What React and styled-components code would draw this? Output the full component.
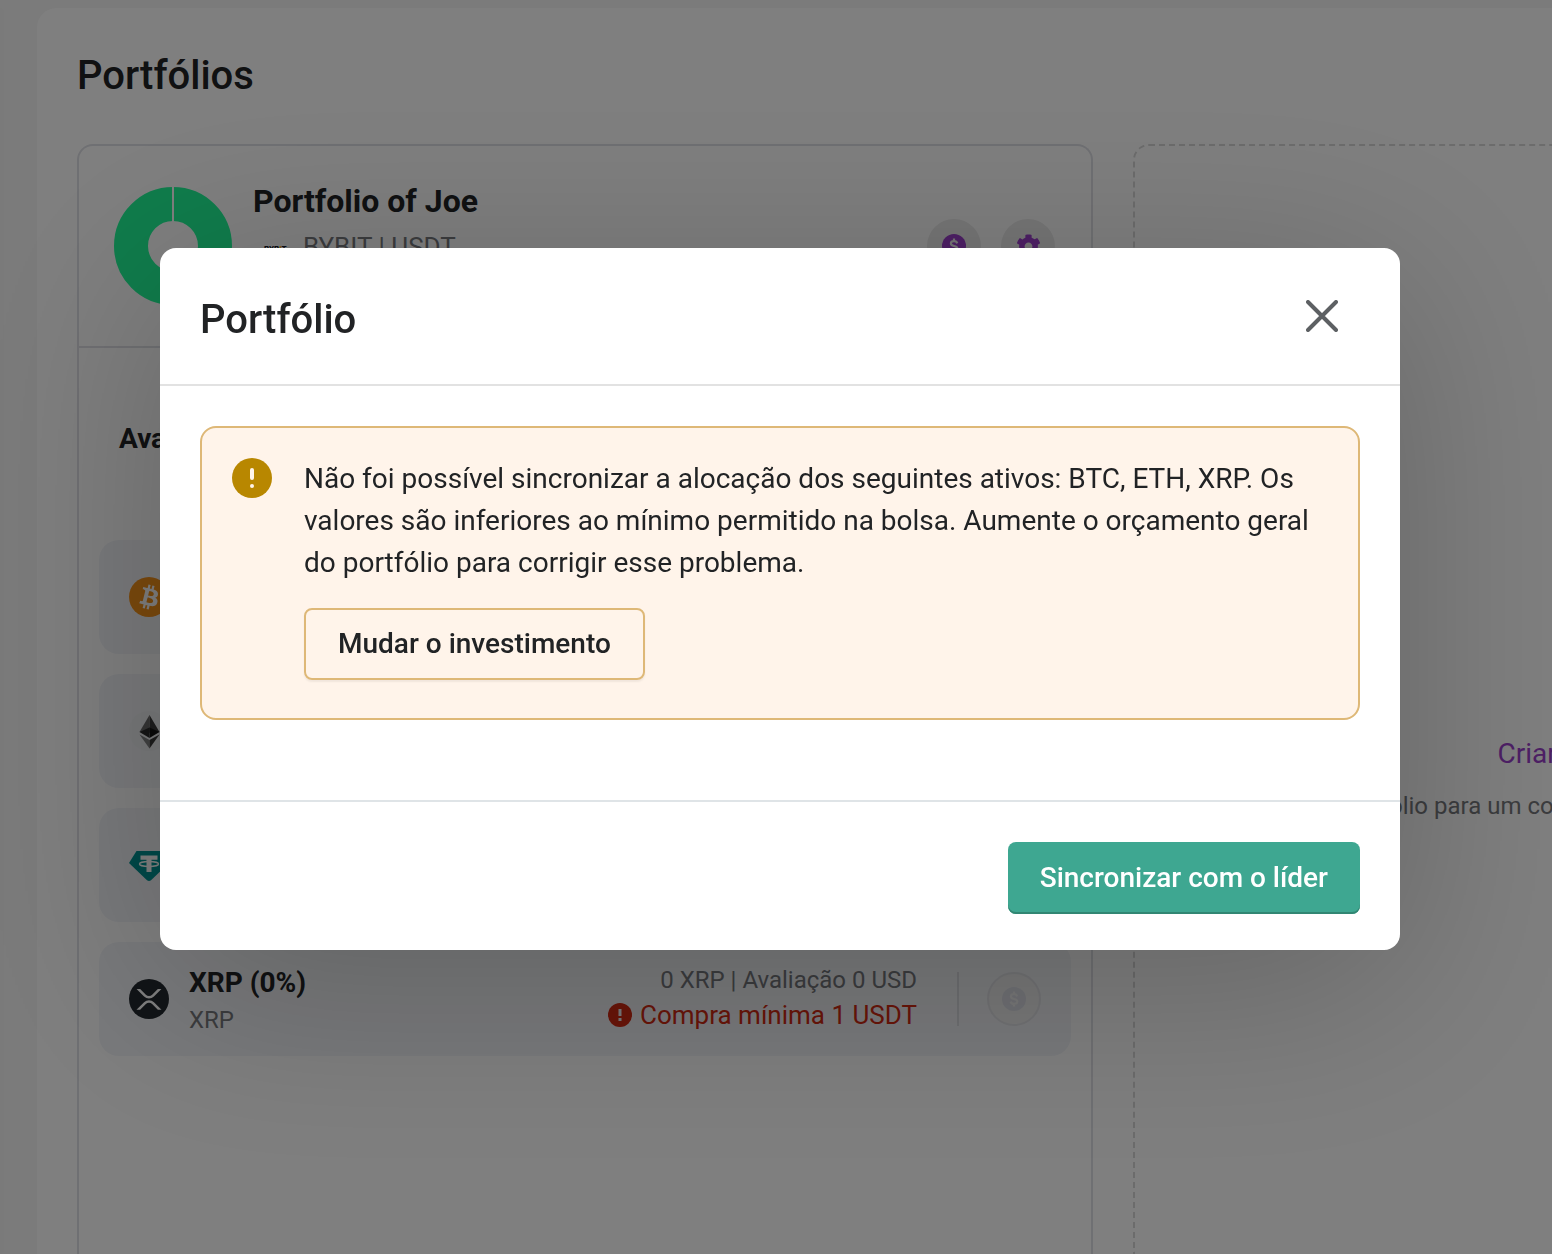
import React from "react";
import styled, { createGlobalStyle } from "styled-components";
import { FaCog } from "react-icons/fa";

const GlobalStyle = createGlobalStyle`
  *, *::before, *::after { box-sizing: border-box; }
  body {
    margin: 0;
    overflow: hidden;
    background: #f7f7f7;
    color: #212325;
    font-family: Roboto, "Liberation Sans", sans-serif;
  }
  h1, h2, h3, p, ul { margin: 0; padding: 0; }
  button { font-family: inherit; cursor: pointer; }
`;

const Page = styled.div`
  display: flex;
  gap: 33px;
  height: 100vh;
  padding-top: 8px;
  overflow: hidden;
`;

const Sidebar = styled.aside`
  flex: none;
  width: 4px;
  border-radius: 0 16px 16px 0;
  background: #f5f5f5;
`;

const Panel = styled.main`
  flex: 1 0 auto;
  display: flex;
  flex-direction: column;
  gap: 38px;
  padding: 38px 40px 0;
  border-radius: 20px 0 0 0;
  background: #fff;
`;

const PageTitle = styled.h1`
  font-size: 40px;
  line-height: 60px;
  font-weight: 500;
`;

const Cards = styled.div`
  flex: 1;
  display: grid;
  grid-template-columns: repeat(2, minmax(1016px, 1fr));
  gap: 40px;
`;

const Card = styled.section`
  border: 2px solid #dfe0e6;
  border-bottom: 0;
  border-radius: 16px 16px 0 0;
`;

const CardHeader = styled.header`
  display: flex;
  align-items: center;
  gap: 20px;
  height: 202px;
  padding: 0 36px 0 34px;
  border-bottom: 2px solid #dfe0e6;
`;

const CardHeading = styled.div`
  flex: 1;
  display: flex;
  flex-direction: column;
  gap: 4px;
  padding-bottom: 50px;
`;

const CardName = styled.h2`
  font-size: 32px;
  line-height: 48px;
  font-weight: 700;
`;

const Exchange = styled.p`
  display: flex;
  align-items: center;
  gap: 8px;
  height: 36px;
  font-size: 26px;
  color: #77797d;
`;

const Actions = styled.div`
  display: flex;
  gap: 20px;
`;

const RoundButton = styled.button`
  display: grid;
  place-items: center;
  width: 54px;
  height: 54px;
  padding: 0;
  border: ${(p) => (p.$outlined ? "2px solid #e4e5e9" : "0")};
  border-radius: 50%;
  background: ${(p) => (p.$outlined ? "#f1f1f2" : "#ececec")};
  color: ${(p) => (p.$outlined ? "#dfe1e9" : "#9b3fcb")};
`;

const Subtitle = styled.h3`
  padding: 68px 40px 78px;
  font-size: 28px;
  line-height: 46px;
  font-weight: 700;
`;

const Assets = styled.ul`
  display: flex;
  flex-direction: column;
  gap: 20px;
  padding: 0 20px;
  list-style: none;
`;

const AssetRow = styled.li`
  display: flex;
  align-items: center;
  gap: 20px;
  height: 114px;
  padding: 0 30px;
  border-radius: 20px;
  background: #f3f5f9;
`;

const AssetText = styled.div`
  flex: 1;
  padding-top: 4px;
`;

const AssetName = styled.p`
  font-size: 28px;
  line-height: 38px;
  font-weight: 700;
`;

const Muted = styled.p`
  font-size: 24px;
  line-height: 36px;
  color: #77797d;
`;

const AssetFigures = styled.div`
  padding-bottom: 4px;
  text-align: right;
`;

const Warning = styled.p`
  display: flex;
  align-items: center;
  justify-content: flex-end;
  gap: 8px;
  font-size: 26px;
  line-height: 34px;
  color: #d42a12;
`;

const AssetAction = styled.div`
  margin-left: 20px;
  padding-left: 28px;
  border-left: 2px solid #dcdee2;
`;

const EmptyCard = styled.section`
  display: flex;
  flex-direction: column;
  align-items: center;
  gap: 8px;
  padding-top: 586px;
  border: 2px dashed #d9d9d9;
  border-bottom: 0;
  border-radius: 16px 16px 0 0;
`;

const CreateLink = styled.a`
  font-size: 28px;
  line-height: 44px;
  color: #9b3fcb;
  text-decoration: none;
`;

const EmptyHint = styled.p`
  font-size: 24px;
  line-height: 44px;
  color: #77797d;
`;

const Backdrop = styled.div`
  position: fixed;
  inset: 0;
  padding: 248px 152px 0 160px;
  background: rgba(0, 0, 0, 0.5);
`;

const Dialog = styled.div`
  border-radius: 16px;
  background: #fff;
  box-shadow: 0 36px 200px rgba(0, 0, 0, 0.22);
`;

const DialogHeader = styled.header`
  display: flex;
  align-items: flex-start;
  justify-content: space-between;
  padding: 40px 40px 32px;
  border-bottom: 2px solid #e2e2e2;
`;

const DialogTitle = styled.h2`
  font-size: 40px;
  line-height: 64px;
  font-weight: 500;
`;

const CloseButton = styled.button`
  display: grid;
  place-items: center;
  width: 76px;
  height: 56px;
  padding: 0;
  border: 0;
  background: transparent;
  color: #5d6063;
`;

const DialogBody = styled.div`
  padding: 40px 40px 80px;
`;

const Alert = styled.div`
  display: flex;
  gap: 32px;
  padding: 30px 30px 38px;
  border: 2px solid #deb877;
  border-radius: 16px;
  background: #fff4ea;
`;

const AlertContent = styled.div`
  flex: 1;
  display: flex;
  flex-direction: column;
  align-items: flex-start;
  gap: 24px;
`;

const AlertText = styled.p`
  font-size: 28px;
  line-height: 42px;
`;

const Button = styled.button`
  height: 72px;
  padding: 0 32px 2px;
  border-radius: 8px;
  font-size: 28px;
  font-weight: 500;
`;

const OutlineButton = styled(Button)`
  border: 2px solid #deb877;
  background: transparent;
  color: #212325;
  box-shadow: 0 2px 2px rgba(0, 0, 0, 0.06);
`;

const PrimaryButton = styled(Button)`
  border: 0;
  background: #3ea791;
  color: #fff;
  box-shadow: inset 0 -2px 0 #328673;
`;

const DialogFooter = styled.footer`
  display: flex;
  justify-content: flex-end;
  padding: 40px 40px 36px;
  border-top: 2px solid #dfe4e7;
`;

const Donut = () => (
  <svg width="120" height="120" viewBox="0 0 120 120" aria-hidden="true">
    <circle cx="60" cy="60" r="42" fill="none" stroke="#20f898" strokeWidth="34" />
    <path d="M60 0v36" stroke="#fff" strokeWidth="2" />
  </svg>
);

const BybitLogo = () => (
  <svg width="42" height="36" viewBox="0 0 42 36" role="img" aria-label="Bybit">
    <text x="11" y="22" fontSize="8" fontWeight="900" fill="#15192a">
      BYB<tspan fill="#f7a600">I</tspan>T
    </text>
  </svg>
);

const DollarIcon = ({ sign }) => (
  <svg width="24" height="24" viewBox="0 0 24 24" aria-hidden="true">
    <circle cx="12" cy="12" r="12" fill="currentColor" />
    <path
      d="M12 4.400v2.600M12 17v2.600M15.200 9.400c-.4-1.500-1.600-2.200-3.200-2.200-1.900 0-3.100.9-3.100 2.300 0 3.500 6.400 1.500 6.400 5 0 1.500-1.400 2.400-3.300 2.400-1.700 0-3-.8-3.400-2.300"
      fill="none"
      stroke={sign}
      strokeWidth="2.200"
    />
  </svg>
);

const BitcoinIcon = () => (
  <svg width="40" height="40" viewBox="0 0 32 32" aria-hidden="true">
    <circle cx="16" cy="16" r="16" fill="#f7931a" />
    <path
      fill="#fff"
      d="M23.189 14.02c.314-2.096-1.283-3.223-3.465-3.975l.708-2.84-1.728-.43-.69 2.765c-.454-.114-.92-.22-1.385-.326l.695-2.783L15.596 6l-.708 2.839c-.376-.086-.746-.17-1.104-.26l.002-.009-2.384-.595-.46 1.846s1.283.294 1.256.312c.7.175.826.638.805 1.006l-.806 3.235c.048.012.11.03.18.057l-.183-.045-1.13 4.532c-.086.212-.303.531-.793.41.018.025-1.256-.313-1.256-.313l-.858 1.978 2.25.561c.418.105.828.215 1.231.318l-.715 2.872 1.727.43.708-2.84c.472.127.93.245 1.378.357l-.706 2.828 1.728.43.715-2.866c2.948.558 5.164.333 6.097-2.333.752-2.146-.037-3.385-1.588-4.192 1.13-.26 1.98-1.003 2.207-2.538zm-3.95 5.538c-.533 2.147-4.148.986-5.32.695l.95-3.805c1.172.293 4.929.872 4.37 3.11zm.535-5.569c-.487 1.953-3.495.96-4.47.717l.86-3.45c.975.243 4.118.696 3.61 2.733z"
    />
  </svg>
);

const EthereumIcon = () => (
  <svg width="40" height="40" viewBox="0 0 40 40" aria-hidden="true">
    <circle cx="20" cy="20" r="20" fill="#f0f1f3" />
    <path d="M20.500 4v17.800L10.500 21z" fill="#6a6b6c" />
    <path d="M20.500 4v17.800L30.500 21z" fill="#3a3a3a" />
    <path d="M20.500 16.500v10.500L10.500 21z" fill="#2c2c2c" />
    <path d="M20.500 16.500v10.500L30.500 21z" fill="#141414" />
    <path d="M10.500 23.500l10 5.500V37.500z" fill="#828384" />
    <path d="M30.500 23.500l-10 5.500V37.500z" fill="#3c3c3b" />
  </svg>
);

const TetherIcon = () => (
  <svg width="40" height="40" viewBox="0 0 40 40" aria-hidden="true">
    <path d="M7.500 6h25L40 18 22 35.200q-2 1.600-4 0L0 18z" fill="#009393" />
    <path d="M11.500 10.500h17v4.200h-6V27h-5V14.700h-6z" fill="#fff" />
    <ellipse cx="20" cy="19" rx="9.500" ry="2.500" fill="none" stroke="#fff" strokeWidth="1.400" />
  </svg>
);

const XrpIcon = () => (
  <svg width="40" height="40" viewBox="0 0 32 32" aria-hidden="true">
    <circle cx="16" cy="16" r="16" fill="#23292f" />
    <path
      fill="#fff"
      d="M23.07 8h2.89l-6.015 5.957a5.621 5.621 0 01-7.89 0L6.035 8H8.93l4.57 4.523a3.556 3.556 0 004.996 0L23.07 8zM8.895 24.563H6l6.055-5.993a5.621 5.621 0 017.89 0L26 24.562h-2.895L18.5 20a3.556 3.556 0 00-4.996 0l-4.61 4.563z"
    />
  </svg>
);

const WarningIcon = () => (
  <svg width="24" height="24" viewBox="0 0 24 24" aria-hidden="true">
    <circle cx="12" cy="12" r="12" fill="currentColor" />
    <path d="M12 6v7M12 15v3" stroke="#f0f2f6" strokeWidth="3" />
  </svg>
);

const AlertIcon = () => (
  <svg width="40" height="40" viewBox="0 0 40 40" aria-hidden="true">
    <circle cx="20" cy="20" r="20" fill="#b88700" />
    <path d="M20 12v8" stroke="#fff4ea" strokeWidth="4" strokeLinecap="round" />
    <circle cx="20" cy="28" r="2" fill="#fff4ea" />
  </svg>
);

const CloseIcon = () => (
  <svg width="32" height="32" viewBox="0 0 32 32" aria-hidden="true">
    <path d="M2 2l28 28M30 2L2 30" stroke="currentColor" strokeWidth="4" strokeLinecap="round" />
  </svg>
);

const assets = [
  { symbol: "BTC", Icon: BitcoinIcon },
  { symbol: "ETH", Icon: EthereumIcon },
  { symbol: "USDT", Icon: TetherIcon },
  {
    symbol: "XRP",
    Icon: XrpIcon,
    title: "XRP (0%)",
    name: "XRP",
    value: "0 XRP | Avaliação 0 USD",
    warning: "Compra mínima 1 USDT",
  },
];

function Asset({ symbol, Icon, title, name, value, warning }) {
  return (
    <AssetRow>
      <Icon />
      <AssetText>
        {title && <AssetName>{title}</AssetName>}
        {name && <Muted>{name}</Muted>}
      </AssetText>
      {value && (
        <AssetFigures>
          <Muted>{value}</Muted>
          <Warning>
            <WarningIcon />
            {warning}
          </Warning>
        </AssetFigures>
      )}
      <AssetAction>
        <RoundButton type="button" $outlined disabled aria-label={`Comprar ${symbol}`}>
          <DollarIcon sign="#f1f1f2" />
        </RoundButton>
      </AssetAction>
    </AssetRow>
  );
}

export default function App() {
  return (
    <>
      <GlobalStyle />
      <Page>
        <Sidebar />
        <Panel>
          <PageTitle>Portfólios</PageTitle>
          <Cards>
            <Card>
              <CardHeader>
                <Donut />
                <CardHeading>
                  <CardName>Portfolio of Joe</CardName>
                  <Exchange>
                    <BybitLogo />
                    BYBIT | USDT
                  </Exchange>
                </CardHeading>
                <Actions>
                  <RoundButton type="button" aria-label="Investimento">
                    <DollarIcon sign="#ececec" />
                  </RoundButton>
                  <RoundButton type="button" aria-label="Configurações">
                    <FaCog size={25} />
                  </RoundButton>
                </Actions>
              </CardHeader>
              <Subtitle>Avaliação</Subtitle>
              <Assets>
                {assets.map((asset) => (
                  <Asset key={asset.symbol} {...asset} />
                ))}
              </Assets>
            </Card>
            <EmptyCard>
              <CreateLink href="#novo">Criar um novo portfólio</CreateLink>
              <EmptyHint>
                Crie um portfólio para um copy trading eficiente e acompanhe seus ativos
              </EmptyHint>
            </EmptyCard>
          </Cards>
        </Panel>
      </Page>
      <Backdrop>
        <Dialog role="dialog" aria-modal="true" aria-labelledby="dialog-title">
          <DialogHeader>
            <DialogTitle id="dialog-title">Portfólio</DialogTitle>
            <CloseButton type="button" aria-label="Fechar">
              <CloseIcon />
            </CloseButton>
          </DialogHeader>
          <DialogBody>
            <Alert role="alert">
              <AlertIcon />
              <AlertContent>
                <AlertText>
                  Não foi possível sincronizar a alocação dos seguintes ativos: BTC, ETH, XRP. Os
                  valores são inferiores ao mínimo permitido na bolsa. Aumente o orçamento geral do
                  portfólio para corrigir esse problema.
                </AlertText>
                <OutlineButton type="button">Mudar o investimento</OutlineButton>
              </AlertContent>
            </Alert>
          </DialogBody>
          <DialogFooter>
            <PrimaryButton type="button">Sincronizar com o líder</PrimaryButton>
          </DialogFooter>
        </Dialog>
      </Backdrop>
    </>
  );
}
